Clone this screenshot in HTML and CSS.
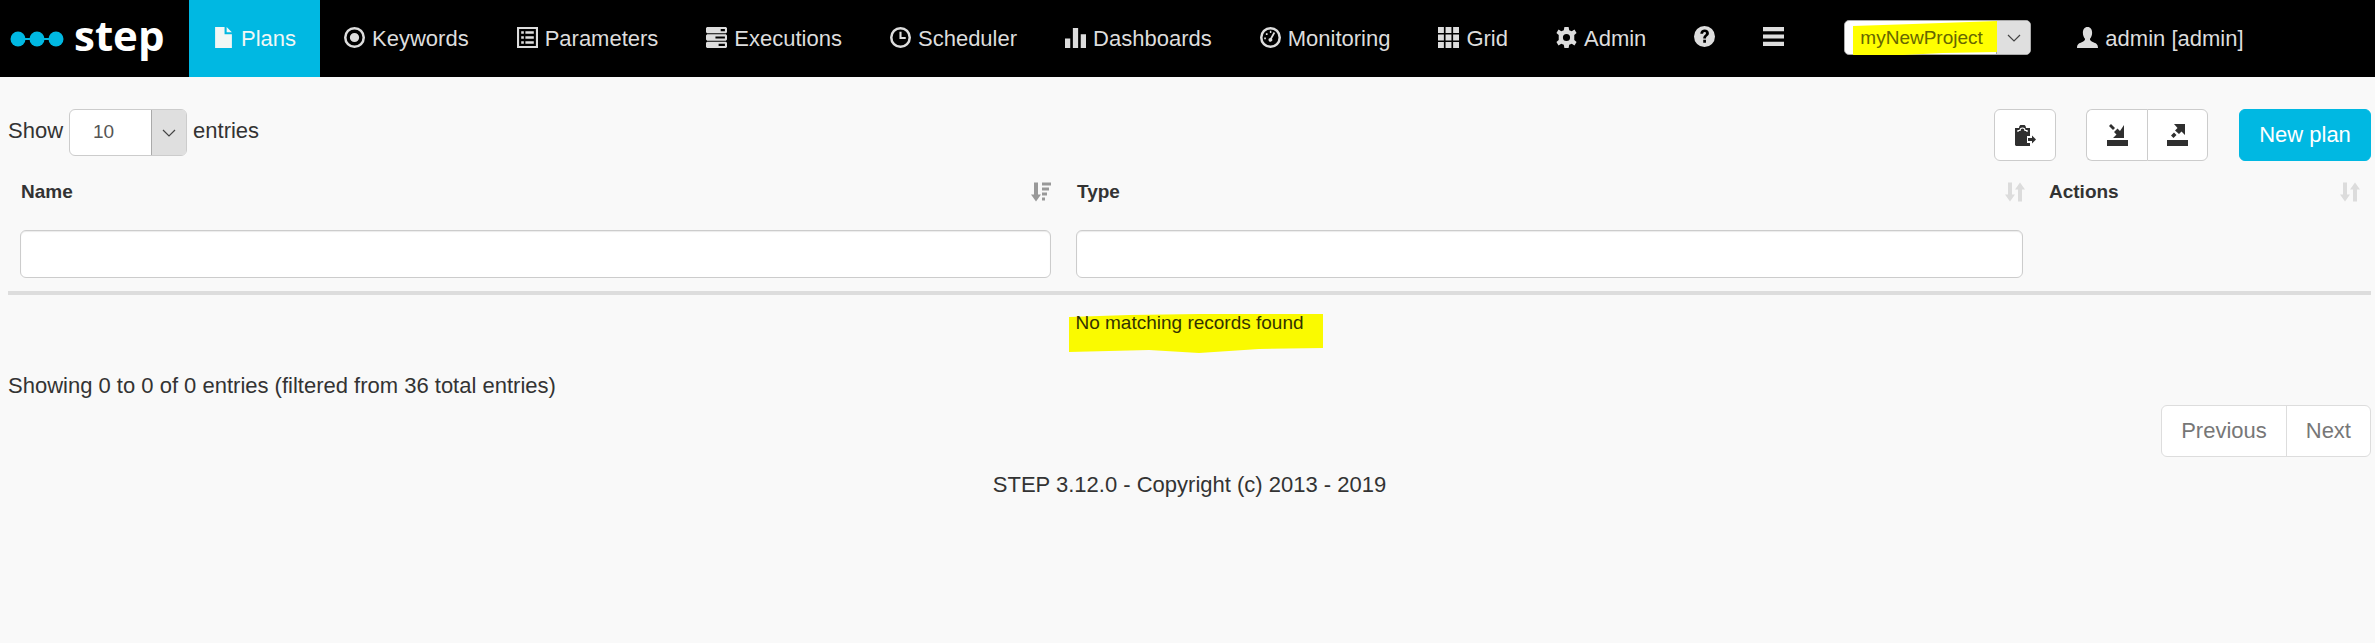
FILE: index.html
```html
<!DOCTYPE html>
<html lang="en">
<head>
    <meta charset="UTF-8">
    <title>STEP - Plans</title>
    <link rel="stylesheet" href="styles.css">
</head>
<body>
    <nav class="navbar">
        <div class="brand">
            <svg class="brand-dots" width="54" height="16" viewBox="0 0 54 16">
                <path d="M8 8H46" stroke="#00b8e2" stroke-width="2"/>
                <circle cx="8" cy="8" r="7.5" fill="#00b8e2"/>
                <circle cx="27" cy="8" r="7.5" fill="#00b8e2"/>
                <circle cx="46" cy="8" r="7.5" fill="#00b8e2"/>
            </svg>
            <span class="brand-name">step</span>
        </div>
        <a class="nav-item active">
            <svg class="nav-icon" viewBox="0 0 20 20"><path d="M2 0H11V7H18V20H2Z M13 0L18 5H13Z"/></svg>
            Plans
        </a>
        <a class="nav-item">
            <svg class="nav-icon" viewBox="0 0 20 20"><path fill-rule="evenodd" d="M10 0a10 10 0 1 0 0 20a10 10 0 1 0 0-20ZM10 2.4a7.6 7.6 0 1 1 0 15.2a7.6 7.6 0 1 1 0-15.2ZM10 5.6a4.4 4.4 0 1 0 0 8.8a4.4 4.4 0 1 0 0-8.8Z"/></svg>
            Keywords
        </a>
        <a class="nav-item">
            <svg class="nav-icon" viewBox="0 0 20 20"><path fill-rule="evenodd" d="M0 0H20V20H0ZM2 2V18H18V2ZM4 4H6.5V6.4H4ZM8 4H16V6.4H8ZM4 8.8H6.5V11.2H4ZM8 8.8H16V11.2H8ZM4 13.6H6.5V16H4ZM8 13.6H16V16H8Z"/></svg>
            Parameters
        </a>
        <a class="nav-item">
            <svg class="nav-icon" viewBox="0 0 20 20"><path fill-rule="evenodd" d="M1 0H19L20 1V5L19 6H1L0 5V1ZM14 2V4H18V2ZM1 7H19L20 8V12L19 13H1L0 12V8ZM9 9V11H18V9ZM1 14H19L20 15V19L19 20H1L0 19V15ZM12 16V18H18V16Z"/></svg>
            Executions
        </a>
        <a class="nav-item">
            <svg class="nav-icon" viewBox="0 0 20 20"><path fill-rule="evenodd" d="M10 0a10 10 0 1 0 0 20a10 10 0 1 0 0-20ZM10 2.4a7.6 7.6 0 1 1 0 15.2a7.6 7.6 0 1 1 0-15.2ZM9 4.5H11V9.5H15V11.5H9Z"/></svg>
            Scheduler
        </a>
        <a class="nav-item">
            <svg class="nav-icon" viewBox="0 0 20 20"><path d="M0 11H5V20H0ZM7.5 1H12.5V20H7.5ZM15 7H20V20H15Z"/></svg>
            Dashboards
        </a>
        <a class="nav-item">
            <svg class="nav-icon" viewBox="0 0 20 20"><path fill-rule="evenodd" d="M10 0a10 10 0 1 0 0 20a10 10 0 1 0 0-20ZM10 2.4a7.6 7.6 0 0 1 7.6 7.6a7.6 7.6 0 0 1-15.2 0a7.6 7.6 0 0 1 7.6-7.6ZM9.4 3.6h1.4v2h-1.4ZM5.6 6h1.6v1.6H5.6ZM4 10h1.6v1.6H4ZM13 4.8l1.4 .8l-3 5.6a1.8 1.8 0 1 1-1.6-.8Z"/></svg>
            Monitoring
        </a>
        <a class="nav-item">
            <svg class="nav-icon" viewBox="0 0 20 20"><path d="M0 0H5.6V5.6H0ZM7.2 0H12.8V5.6H7.2ZM14.4 0H20V5.6H14.4ZM0 7.2H5.6V12.8H0ZM7.2 7.2H12.8V12.8H7.2ZM14.4 7.2H20V12.8H14.4ZM0 14.4H5.6V20H0ZM7.2 14.4H12.8V20H7.2ZM14.4 14.4H20V20H14.4Z"/></svg>
            Grid
        </a>
        <a class="nav-item">
            <svg class="nav-icon" viewBox="0 0 20 20"><path fill-rule="evenodd" d="M8 0H12L12.6 3L15 4L17.6 2.4L19.6 5.6L17.4 7.6V12.4L19.6 14.4L17.6 17.6L15 16L12.6 17L12 20H8L7.4 17L5 16L2.4 17.6L.4 14.4L2.6 12.4V7.6L.4 5.6L2.4 2.4L5 4L7.4 3ZM10 6.6a3.4 3.4 0 1 0 0 6.8a3.4 3.4 0 1 0 0-6.8Z"/></svg>
            Admin
        </a>
        <a class="nav-item">
            <svg class="nav-icon icon-only" viewBox="0 0 20 20"><path fill-rule="evenodd" d="M10 0a10 10 0 1 0 0 20a10 10 0 1 0 0-20ZM6 7.4C6 4.8 8 3.4 10.2 3.4C12.5 3.4 14.2 4.8 14.2 6.9C14.2 9.6 11.4 9.6 11.4 11.8H8.8C8.8 8.8 11.4 8.6 11.4 7C11.4 6.2 10.9 5.7 10.1 5.7C9.2 5.7 8.7 6.4 8.7 7.4ZM8.8 13.2H11.4V16H8.8Z"/></svg>
        </a>
        <a class="nav-item">
            <svg class="nav-icon icon-only" viewBox="0 0 20 20"><path d="M0 1H20V5H0ZM0 8H20V12H0ZM0 15H20V19H0Z"/></svg>
        </a>
        <div class="project-select">
            <svg class="project-mark" width="144" height="36" viewBox="0 0 144 36"><path d="M0 5L60 3L144 0V31L90 32L50 34H0Z"/></svg>
            <span class="project-value">myNewProject</span>
            <span class="select-arrow">
                <svg width="14" height="8" viewBox="0 0 14 8"><path d="M1 1L7 7L13 1" fill="none" stroke="#444" stroke-width="1.2"/></svg>
            </span>
        </div>
        <a class="nav-item user-item">
            <svg class="nav-icon" viewBox="0 0 20 20"><path d="M10 0C13 0 14.4 2.4 14.4 5.4C14.4 8 13.4 10 12.4 11.2C12.2 12.6 13 13.4 15 14.2C18 15.4 20 16 20 20H0C0 16 2 15.4 5 14.2C7 13.4 7.8 12.6 7.6 11.2C6.6 10 5.6 8 5.6 5.4C5.6 2.4 7 0 10 0Z"/></svg>
            admin [admin]
        </a>
    </nav>

    <main class="page">
        <div class="toolbar">
            <div class="length">
                <span>Show</span>
                <div class="length-select">
                    <span class="length-value">10</span>
                    <span class="select-arrow">
                        <svg width="14" height="8" viewBox="0 0 14 8"><path d="M1 1L7 7L13 1" fill="none" stroke="#444" stroke-width="1.2"/></svg>
                    </span>
                </div>
                <span>entries</span>
            </div>
            <div class="actions">
                <button class="btn btn-icon">
                    <svg width="21" height="21" viewBox="0 0 21 21">
                        <path d="M0 3H4A3.5 3.5 0 0 1 11 3H15V11H12V18H15V21H1L0 20Z" fill="#2f2f2f"/>
                        <path d="M3 7V5.5H5A2.5 2.5 0 0 1 10 5.5H12V7" fill="none" stroke="#fff" stroke-width="1.2"/>
                        <path d="M13 13H17V10.5L21 14.5L17 18.5V16H13Z" fill="#2f2f2f"/>
                    </svg>
                </button>
                <div class="btn-group">
                    <button class="btn btn-icon">
                        <svg width="21" height="22" viewBox="0 0 21 22"><path d="M0 16H21V22H0Z M17 1V14H6L9.5 10.5L7 8L10.5 4.5L13 7Z M4 0L8 4L6 6L2 2Z" fill="#2f2f2f"/></svg>
                    </button>
                    <button class="btn btn-icon">
                        <svg width="21" height="22" viewBox="0 0 21 22"><path d="M0 16H21V22H0Z M7 0H18V11L14.5 7.5L12 10L8 6.5L10.5 4Z M7 8.5L9.5 11L6.5 14L4 11.5Z" fill="#2f2f2f"/></svg>
                    </button>
                </div>
                <button class="btn btn-primary">New plan</button>
            </div>
        </div>

        <table class="data-table">
            <thead>
                <tr class="head-row">
                    <th class="col-name">
                        <div class="th-inner">Name
                            <svg class="sort-icon sorted" width="20" height="20" viewBox="0 0 20 19"><path d="M3 0H7V12H10L5 19L0 12H3ZM11 0H20V3H11ZM11 5H18V8H11ZM11 10H16V13H11ZM11 15H14V18H11Z"/></svg>
                        </div>
                    </th>
                    <th class="col-type">
                        <div class="th-inner">Type
                            <svg class="sort-icon" width="20" height="20" viewBox="0 0 20 19"><path d="M3 0H7V12H10L5 19L0 12H3ZM13 19H17V7H20L15 0L10 7H13Z"/></svg>
                        </div>
                    </th>
                    <th class="col-actions">
                        <div class="th-inner">Actions
                            <svg class="sort-icon" width="20" height="20" viewBox="0 0 20 19"><path d="M3 0H7V12H10L5 19L0 12H3ZM13 19H17V7H20L15 0L10 7H13Z"/></svg>
                        </div>
                    </th>
                </tr>
                <tr class="filter-row">
                    <th class="col-name"><input class="filter" type="text"></th>
                    <th class="col-type"><input class="filter" type="text"></th>
                    <th class="col-actions"></th>
                </tr>
            </thead>
            <tbody>
                <tr>
                    <td class="empty" colspan="3">
                        <span class="marked">
                            <svg class="marker" width="254" height="40" viewBox="0 0 254 40"><path d="M0 3L60 1L130 0H254V34L190 35L130 39L80 36L40 37L0 38Z"/></svg>
                            <span class="marked-text">No matching records found</span>
                        </span>
                    </td>
                </tr>
            </tbody>
        </table>

        <div class="info">Showing 0 to 0 of 0 entries (filtered from 36 total entries)</div>

        <div class="pager-wrap">
            <div class="pager">
                <a class="page-link">Previous</a>
                <a class="page-link">Next</a>
            </div>
        </div>

        <footer class="footer">STEP 3.12.0 - Copyright (c) 2013 - 2019</footer>
    </main>
</body>
</html>
```

FILE: styles.css
```css
body {
    margin: 0;
    background-color: #f9f9f9;
    color: #333333;
    font-family: "Liberation Sans", Arial, sans-serif;
    font-size: 22px;
    overflow: hidden;
}

/* top bar */
.navbar {
    display: flex;
    align-items: stretch;
    height: 77px;
    background-color: #000000;
    color: #dddddd;
}

.brand {
    display: flex;
    align-items: center;
    width: 189px;
    box-sizing: border-box;
    padding-left: 10px;
}

.brand-name {
    margin-left: 10px;
    margin-top: -8px;
    font-family: "Open Sans", sans-serif;
    font-weight: 700;
    font-size: 42px;
    color: #ffffff;
}

.nav-item {
    display: flex;
    align-items: center;
    gap: 7px;
    padding: 0 24px;
    white-space: nowrap;
}

.nav-item.active {
    background-color: #00b8e2;
    color: #f2f7f5;
}

.nav-icon {
    width: 21px;
    height: 21px;
    fill: currentColor;
    margin-top: -2px;
}

.icon-only {
    margin-top: -4px;
}

.user-item {
    margin-left: 22px;
}

/* project selector */
.project-select {
    position: relative;
    display: flex;
    align-self: center;
    margin-left: 36px;
    margin-top: -2px;
    width: 187px;
    height: 35px;
    box-sizing: border-box;
    background-color: #ffffff;
    border: 1px solid #aaaaaa;
    border-radius: 5px;
    font-size: 19px;
    color: #666600;
}

.project-mark {
    position: absolute;
    left: 8px;
    top: 0;
    fill: #ffff00;
}

.project-value {
    position: relative;
    flex: 1;
    padding-left: 15px;
    line-height: 33px;
}

.select-arrow {
    display: flex;
    align-items: center;
    justify-content: center;
    width: 33px;
    background-color: #dfdfdf;
    border-left: 1px solid #aaaaaa;
    border-radius: 0 4px 4px 0;
}

/* page */
.page {
    padding: 0 4px 0 8px;
}

.toolbar {
    display: flex;
    justify-content: space-between;
    margin-top: 32px;
    height: 52px;
}

.length {
    display: flex;
    align-items: flex-start;
    gap: 6px;
    line-height: 44px;
}

.length-select {
    display: flex;
    width: 118px;
    height: 47px;
    box-sizing: border-box;
    background-color: #ffffff;
    border: 1px solid #cccccc;
    border-radius: 6px;
    font-size: 19px;
    color: #555555;
}

.length-value {
    flex: 1;
    padding-left: 23px;
}

.length-select .select-arrow {
    width: 34px;
    border-left-color: #aaaaaa;
}

.actions {
    display: flex;
}

.btn {
    height: 52px;
    box-sizing: border-box;
    border: 1px solid #cccccc;
    border-radius: 6px;
    background-color: #ffffff;
    font-family: inherit;
    font-size: 22px;
    padding: 0;
}

.btn-icon {
    display: flex;
    align-items: center;
    justify-content: center;
    width: 62px;
}

.btn-group {
    display: flex;
    margin-left: 30px;
}

.btn-group .btn {
    width: 61px;
}

.btn-group .btn:first-child {
    border-radius: 6px 0 0 6px;
    border-right: none;
}

.btn-group .btn:last-child {
    border-radius: 0 6px 6px 0;
}

.btn-primary {
    width: 132px;
    margin-left: 31px;
    background-color: #00b8e2;
    border-color: #00b8e2;
    color: #ffffff;
}

/* table */
.data-table {
    width: 100%;
    table-layout: fixed;
    border-collapse: collapse;
    font-size: 19px;
}

.data-table th {
    box-sizing: border-box;
}

.col-name {
    width: 1056px;
}

.col-actions {
    width: 335px;
}

.head-row th {
    height: 61px;
    padding: 0 11px 0 13px;
    text-align: left;
    vertical-align: middle;
}

.head-row .col-name {
    padding-right: 13px;
}

.th-inner {
    display: flex;
    justify-content: space-between;
    align-items: center;
    font-weight: 700;
}

.sort-icon {
    fill: #dcdcdc;
}

.sort-icon.sorted {
    fill: #999999;
}

.filter-row th {
    height: 71px;
    padding: 0 13px 5px 12px;
    border-bottom: 4px solid #dddddd;
}

.filter {
    display: block;
    width: 100%;
    height: 48px;
    box-sizing: border-box;
    background-color: #ffffff;
    border: 1px solid #cccccc;
    border-radius: 6px;
    box-shadow: inset 0 1px 1px rgba(0, 0, 0, 0.08);
}

.empty {
    height: 57px;
    padding: 0;
    text-align: center;
    vertical-align: top;
}

.marked {
    position: relative;
    display: inline-block;
    margin-top: 18px;
    line-height: 19px;
}

.marker {
    position: absolute;
    left: -6px;
    top: 1px;
    fill: #fafa00;
}

.marked-text {
    position: relative;
    color: #333300;
}

.info {
    margin-top: 21px;
    line-height: 25px;
}

.pager-wrap {
    display: flex;
    justify-content: flex-end;
    margin-top: 7px;
}

.pager {
    display: flex;
    height: 52px;
    box-sizing: border-box;
    background-color: #ffffff;
    border: 1px solid #dddddd;
    border-radius: 6px;
    color: #777777;
    line-height: 50px;
}

.page-link {
    padding: 0 19px;
}

.page-link + .page-link {
    border-left: 1px solid #dddddd;
}

.footer {
    margin-top: 15px;
    text-align: center;
    line-height: 26px;
}
```
